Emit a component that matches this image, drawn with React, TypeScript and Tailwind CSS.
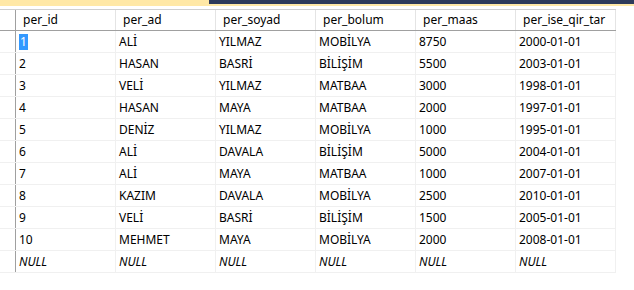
import React from "react";

const cols = ["per_id", "per_ad", "per_soyad", "per_bolum", "per_maas", "per_ise_qir_tar"];
const rows: string[][] = [
  ["1", "ALİ", "YILMAZ", "MOBİLYA", "8750", "2000-01-01"],
  ["2", "HASAN", "BASRİ", "BİLİŞİM", "5500", "2003-01-01"],
  ["3", "VELİ", "YILMAZ", "MATBAA", "3000", "1998-01-01"],
  ["4", "HASAN", "MAYA", "MATBAA", "2000", "1997-01-01"],
  ["5", "DENİZ", "YILMAZ", "MOBİLYA", "1000", "1995-01-01"],
  ["6", "ALİ", "DAVALA", "BİLİŞİM", "5000", "2004-01-01"],
  ["7", "ALİ", "MAYA", "MATBAA", "1000", "2007-01-01"],
  ["8", "KAZIM", "DAVALA", "MOBİLYA", "2500", "2010-01-01"],
  ["9", "VELİ", "BASRİ", "BİLİŞİM", "1500", "2005-01-01"],
  ["10", "MEHMET", "MAYA", "MOBİLYA", "2000", "2008-01-01"],
];

export default function App() {
  return (
    <div
      className="w-[634px] h-[290px] bg-white overflow-hidden text-[12px] text-black"
      style={{ fontFamily: '"Noto Sans", "Open Sans", sans-serif' }}
    >
      {/* top tab strip */}
      <div className="h-[6px] bg-[#ffe8a6] flex">
        <div className="w-[209px]" />
        <div className="flex-1 h-[4px] bg-[#2e3b5b]" />
      </div>
      <div className="h-[3px]" />
      {/* grid */}
      <div className="w-[616px]">
        {/* header */}
        <div className="flex h-[22px] border-t border-[#cfcfcf] border-b border-b-[#a0a0a0]">
          <div className="w-[16px] border-r border-[#a0a0a0]" />
          {cols.map((c) => (
            <div
              key={c}
              className="w-[100px] border-r border-[#e4e4e4] pl-[7px] flex items-center leading-none"
            >
              {c}
            </div>
          ))}
        </div>
        {rows.map((r, i) => (
          <div key={i} className="flex h-[22px] border-b border-[#f0f0f0]">
            <div className="w-[16px] border-r border-[#a0a0a0]" />
            {r.map((v, j) => (
              <div
                key={j}
                className="w-[100px] border-r border-[#f0f0f0] pl-[3px] flex items-center leading-none"
              >
                {i === 0 && j === 0 ? (
                  <span className="bg-[#3399ff] text-white px-[1px] h-[16px] flex items-center">{v}</span>
                ) : (
                  v
                )}
              </div>
            ))}
          </div>
        ))}
        <div className="flex h-[22px] border-b border-[#f0f0f0]">
          <div className="w-[16px] border-r border-[#a0a0a0]" />
          {cols.map((c) => (
            <div
              key={c}
              className="w-[100px] border-r border-[#f0f0f0] pl-[3px] flex items-center leading-none italic"
            >
              NULL
            </div>
          ))}
        </div>
      </div>
    </div>
  );
}
